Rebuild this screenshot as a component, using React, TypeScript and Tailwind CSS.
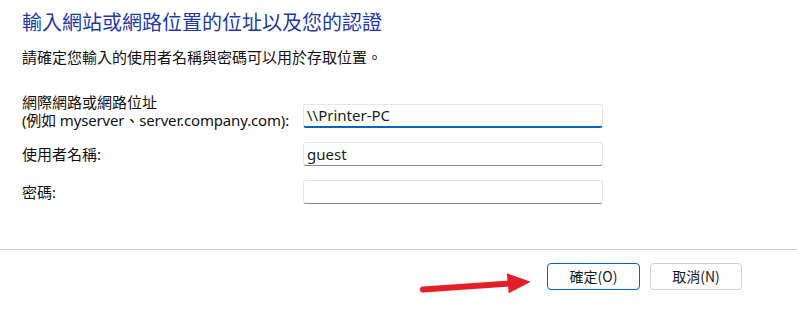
import React from "react";

const cjk = '"Noto Sans CJK TC", sans-serif';
const latin = '"Noto Sans", "Noto Sans CJK TC", sans-serif';

function Field({ value, focused }: { value?: string; focused?: boolean }) {
  return (
    <div
      className={
        "w-[300px] h-[24px] bg-white rounded-[3px] border border-[#e5e5e5] flex items-center pl-[3px] text-[15px] text-[#1a1a1a] " +
        (focused ? "border-b-2 border-b-[#0067c0]" : "border-b-[#8a8a8a]")
      }
      style={{ fontFamily: latin }}
    >
      {value}
    </div>
  );
}

export default function App() {
  return (
    <div className="relative w-[797px] h-[313px] bg-white text-black overflow-hidden" style={{ fontFamily: cjk }}>
      <div className="h-[249px] px-[22px] pt-[9px]">
        <div className="text-[20px] leading-[26px] text-[#1f3aa3]">輸入網站或網路位置的位址以及您的認證</div>
        <div className="mt-[12px] text-[15px] leading-[20px] text-[#111]">請確定您輸入的使用者名稱與密碼可以用於存取位置。</div>

        <div className="mt-[26px] flex flex-col">
          <div className="flex items-start h-[35px]">
            <div className="w-[281px] text-[15px] leading-[18px] text-[#111]" style={{ fontFamily: latin }}>
              <div>網際網路或網路位址</div>
              <div className="tracking-[-0.15px]">(例如 myserver、server.company.com):</div>
            </div>
            <div className="mt-[11px]">
              <Field value={"\\\\Printer-PC"} focused />
            </div>
          </div>
          <div className="flex items-center h-[24px] mt-[14px]">
            <div className="w-[281px] text-[15px] leading-[18px] text-[#111]" style={{ fontFamily: latin }}>使用者名稱:</div>
            <Field value="guest" />
          </div>
          <div className="flex items-center h-[24px] mt-[14px]">
            <div className="w-[281px] text-[15px] leading-[18px] text-[#111]" style={{ fontFamily: latin }}>密碼:</div>
            <Field />
          </div>
        </div>
      </div>

      <div className="border-t border-[#cccccc] pt-[13px] flex justify-end gap-[10px] pr-[55px]">
        <button className="w-[93px] h-[27px] rounded-[4px] border border-[#0067c0] bg-[#fdfdfd] text-[14px] text-[#1a1a1a] flex items-center justify-center">
          確定(O)
        </button>
        <button className="w-[92px] h-[27px] rounded-[4px] border border-[#d0d0d0] bg-[#fdfdfd] text-[14px] text-[#1a1a1a] flex items-center justify-center">
          取消(N)
        </button>
      </div>

      <svg className="absolute left-[410px] top-[265px]" width="130" height="35" viewBox="0 0 130 35">
        <line x1="13" y1="24.5" x2="100" y2="18.5" stroke="#e51f26" strokeWidth="6" strokeLinecap="round" />
        <polygon points="96.7,8.3 120.7,16.7 98.7,28.3" fill="#e51f26" />
      </svg>
    </div>
  );
}
